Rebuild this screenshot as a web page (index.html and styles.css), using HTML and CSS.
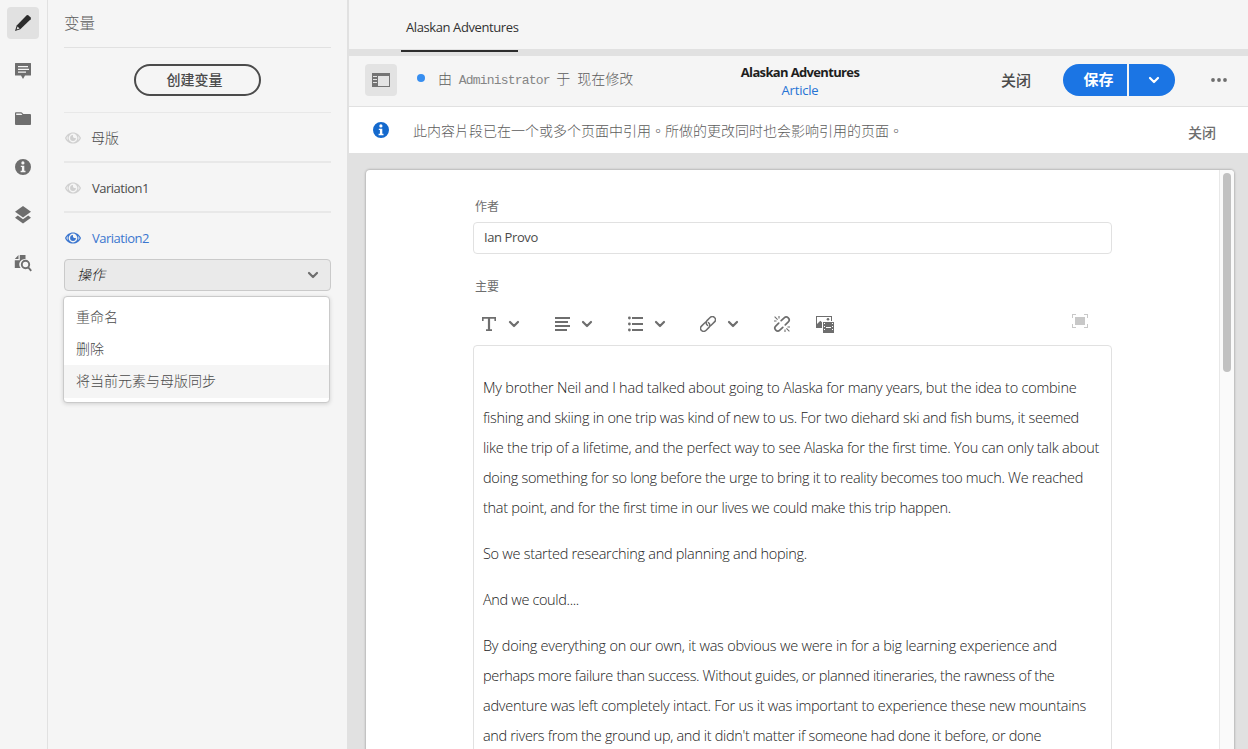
FILE: index.html
```html
<!DOCTYPE html>
<html lang="zh-CN">
<head>
<meta charset="utf-8">
<title>Alaskan Adventures</title>
<link rel="stylesheet" href="styles.css">
</head>
<body>
<svg class="defs" aria-hidden="true">
  <symbol id="chev" viewBox="0 0 12 8"><path d="M2 2 6 6l4-4" fill="none" stroke="currentColor" stroke-width="2.200" stroke-linecap="round" stroke-linejoin="round"/></symbol>
  <symbol id="eye" viewBox="0 0 16 12"><path fill-rule="evenodd" d="M0 6C1.200 2.800 4.300.400 8 .400S14.800 2.800 16 6C14.800 9.200 11.700 11.600 8 11.600S1.200 9.200 0 6ZM8 1.600A4.400 4.400 0 1 0 8 10.400 4.400 4.400 0 0 0 8 1.600ZM2.900 3.900Q1.600 5 1.500 6T2.900 8.100Q2.100 6 2.900 3.900ZM13.100 3.900Q14.400 5 14.500 6T13.100 8.100Q13.900 6 13.100 3.900Z"/><path d="M8 3.100A2.900 2.900 0 1 0 10.900 6H9L8 5Z"/></symbol>
  <symbol id="info" viewBox="0 0 16 16"><path fill-rule="evenodd" d="M8 0a8 8 0 1 0 0 16A8 8 0 0 0 8 0ZM7.900 2.300a1.600 1.600 0 1 1 0 3.200 1.600 1.600 0 0 1 0-3.200ZM5.800 6.700H9.300V11.700H10.500V13.200H5.600V11.700H6.900V8.100H5.800Z"/></symbol>
</svg>
<div class="app">
  <nav class="rail">
    <a class="rail-item selected"><svg width="18" height="18" viewBox="0 0 18 18"><path d="M12.700 1.300 14 .900 17 3.700 16.700 5.200 6.300 15.200 1 17 2.700 11.600Z"/><path d="M3.500 12.400 5.600 14.500 2.600 15.500Z" fill="#e1e1e1"/></svg></a>
    <a class="rail-item"><svg width="16" height="16" viewBox="0 0 16 16"><path fill-rule="evenodd" d="M.5 0H15.500a.5.500 0 0 1 .5.500V12a.5.500 0 0 1-.5.500H10L8 16 6 12.500H.500A.5.500 0 0 1 0 12V.500A.5.500 0 0 1 .500 0ZM3 3V4.200H13V3ZM3 5.700V6.900H14V5.700ZM3 8.500V9.700H11V8.500Z"/></svg></a>
    <a class="rail-item"><svg width="16" height="14" viewBox="0 0 16 14"><path fill-rule="evenodd" d="M0 1Q0 .300 1 .300H6Q7 .300 7.600 1.200L8.300 2H15Q16 2 16 3V12.300Q16 13 15 13H1Q0 13 0 12ZM1.200 1.500V3H7.400L6.200 1.500Z"/></svg></a>
    <a class="rail-item"><svg width="16" height="16"><use href="#info"/></svg></a>
    <a class="rail-item"><svg width="16" height="18" viewBox="0 0 16 18"><path d="M8 0 16 5.800 8 11.400 0 5.800Z"/><path d="M2.800 9.600 8 13.200 13.200 9.600 16 11.700 8 17.400 0 11.700Z"/></svg></a>
    <a class="rail-item"><svg width="18" height="18" viewBox="0 0 18 18"><path d="M4.500 1V5H.800ZM5.800 1H11.500V5A5.500 5.500 0 0 0 6.600 14H.800V6.200H5.800Z"/><path fill="none" stroke="currentColor" stroke-width="1.900" d="M15.200 10.500a3.700 3.700 0 1 1-7.400 0 3.700 3.700 0 0 1 7.400 0ZM14.100 13.200 17.200 16.800"/></svg></a>
  </nav>
  <aside class="side">
    <h1 class="side-title">变量</h1>
    <div class="create"><button class="pill">创建变量</button></div>
    <div class="row"><svg width="16" height="12"><use href="#eye"/></svg><span class="zh">母版</span></div>
    <div class="row"><svg width="16" height="12"><use href="#eye"/></svg><span>Variation1</span></div>
    <div class="row active"><svg width="16" height="12"><use href="#eye"/></svg><span>Variation2</span></div>
    <div class="select"><em>操作</em><svg width="12" height="8"><use href="#chev"/></svg>
      <ul class="menu"><li>重命名</li><li>删除</li><li class="hover">将当前元素与母版同步</li></ul>
    </div>
  </aside>
  <main class="main">
    <div class="tabs"><span class="tab">Alaskan Adventures</span></div>
    <header class="bar">
      <div class="bar-left">
        <button class="toggle"><svg width="18" height="14" viewBox="0 0 18 14"><path fill-rule="evenodd" d="M0 0H18V14H0ZM6 3V13H17V3ZM1 3V4H5V3ZM1 6V7H5V6ZM1 9V10H5V9Z"/></svg></button>
        <i class="dot"></i>
        <span class="status">由 <span class="mono">Administrator</span> 于<span class="now">现在修改</span></span>
      </div>
      <div class="bar-title"><b>Alaskan Adventures</b><a>Article</a></div>
      <div class="bar-right">
        <button class="close">关闭</button>
        <div class="save"><button class="save-main">保存</button><button class="save-more"><svg width="12" height="8"><use href="#chev"/></svg></button></div>
        <svg class="more" width="16" height="4" viewBox="0 0 16 4"><circle cx="2" cy="2" r="1.900"/><circle cx="8" cy="2" r="1.900"/><circle cx="14" cy="2" r="1.900"/></svg>
      </div>
    </header>
    <div class="notice"><svg width="16" height="16"><use href="#info"/></svg><p lang="zh-TW">此内容片段已在一个或多个页面中引用。所做的更改同时也会影响引用的页面。</p><button>关闭</button></div>
    <div class="stage">
      <section class="card">
        <div class="form">
          <label class="label">作者</label>
          <div class="input">Ian Provo</div>
          <label class="label second">主要</label>
          <div class="tools">
            <span class="tool"><svg width="16" height="16" viewBox="0 0 16 16"><path d="M1 1H15V5H13.400V2.700H9.100V13.300H11V15H5V13.300H6.900V2.700H2.600V5H1Z"/></svg><svg width="12" height="8"><use href="#chev"/></svg></span>
            <span class="tool"><svg width="16" height="16" viewBox="0 0 16 16"><path d="M1 1h15v2H1zM1 5h13v2H1zM1 9h15v2H1zM1 13h12v2H1z"/></svg><svg width="12" height="8"><use href="#chev"/></svg></span>
            <span class="tool"><svg width="16" height="16" viewBox="0 0 16 16"><path d="M5 1h11v2H5zM5 7h11v2H5zM5 13h11v2H5z"/><circle cx="2.400" cy="2" r="1.400"/><circle cx="2.400" cy="8" r="1.400"/><circle cx="2.400" cy="14" r="1.400"/></svg><svg width="12" height="8"><use href="#chev"/></svg></span>
            <span class="tool"><svg width="16" height="16" viewBox="1 1 16 16"><g fill="none" stroke="currentColor" stroke-width="1.500" stroke-linecap="round"><path d="M10.800 10.900A3.100 3.100 0 0 0 12.400 10L15.500 6.900A3.100 3.100 0 0 0 11.100 2.500L8 5.600A3.100 3.100 0 0 0 8.600 10.400"/><path d="M7.200 7.100A3.100 3.100 0 0 0 5.600 8L2.500 11.100A3.100 3.100 0 0 0 6.900 15.500L10 12.400A3.100 3.100 0 0 0 9.400 7.600"/></g></svg><svg width="12" height="8"><use href="#chev"/></svg></span>
            <svg class="unlink" width="18" height="18" viewBox="0 0 18 18"><g fill="none" stroke="currentColor" stroke-width="1.700" stroke-linecap="round"><path d="M8.200 5.700 11.200 2.800A2.900 2.900 0 0 1 15.300 6.900L12.300 9.900M9.800 12.300 6.800 15.200A2.900 2.900 0 0 1 2.700 11.100L5.700 8.100"/></g><path fill="none" stroke="currentColor" stroke-width="1.100" d="M1 6H3.500M1.600 1.600 4.600 4.600M6 1V3.500M14.500 12H17M13.400 13.400 16.400 16.400M12 14.500V17"/></svg>
            <svg class="media" width="19" height="18" viewBox="0 0 19 18"><path fill-rule="evenodd" d="M1 1H17V6H16V2H2V9L5.300 5.800 7 7.300V13H1Z"/><circle cx="13" cy="4.200" r="1.300"/><path fill-rule="evenodd" d="M8 7H19V18H8ZM9 8V9H10V8ZM9 11V12H10V11ZM9 14V15H10V14ZM17 8V9H18V8ZM17 11V12H18V11ZM17 14V15H18V14ZM11 12V13H16V12Z"/></svg>
            <svg class="full" width="16" height="14" viewBox="0 0 16 14"><path d="M3 3h10v8H3zM0 0h4v1H1v3H0zM12 0h4v4h-1V1h-3zM0 10h1v3h3v1H0zM15 10h1v4h-4v-1h3z"/></svg>
          </div>
          <article class="editor">
            <p><span class="l1">My brother Neil and I had talked about going to Alaska for many years, but the idea to combine</span> <span class="l2">fishing and skiing in one trip was kind of new to us. For two diehard ski and fish bums, it seemed</span> <span class="l3">like the trip of a lifetime, and the perfect way to see Alaska for the first time. You can only talk about</span> <span class="l4">doing something for so long before the urge to bring it to reality becomes too much. We reached</span> <span class="l5">that point, and for the first time in our lives we could make this trip happen.</span></p>
            <p><span class="l6">So we started researching and planning and hoping.</span></p>
            <p><span class="l7">And we could....</span></p>
            <p><span class="l8">By doing everything on our own, it was obvious we were in for a big learning experience and</span> <span class="l9">perhaps more failure than success. Without guides, or planned itineraries, the rawness of the</span> <span class="l10">adventure was left completely intact. For us it was important to experience these new mountains</span> <span class="l11">and rivers from the ground up, and it didn't matter if someone had done it before, or done</span></p>
          </article>
        </div>
        <div class="scroll"><i></i></div>
      </section>
    </div>
  </main>
</div>
</body>
</html>
```
FILE: styles.css
```css
* { box-sizing: border-box; }
body { margin: 0; font-family: "Open Sans", "Noto Sans CJK SC", sans-serif; font-size: 13px; letter-spacing: -.4px; color: #4b4b4b; }
h1, p, ul { margin: 0; padding: 0; list-style: none; }
button { font: inherit; color: inherit; border: 0; background: none; padding: 0; }
svg { display: block; fill: currentColor; flex: none; }
.defs { position: absolute; width: 0; height: 0; }
.app { display: flex; width: 1248px; height: 749px; overflow: hidden; background: #f5f5f5; }

.rail { width: 48px; border-right: 1px solid #e1e1e1; padding: 7px 0 0 7px; display: flex; flex-direction: column; gap: 16px; color: #6e6e6e; flex: none; }
.rail-item { width: 32px; height: 32px; display: grid; place-items: center; border-radius: 4px; }
.rail-item.selected { background: #e1e1e1; color: #2c2c2c; }

.side { width: 301px; flex: none; padding: 0 16px; border-right: 2px solid #e1e1e1; }
.side-title { height: 48px; line-height: 46px; font-size: 15.5px; letter-spacing: 0; font-weight: 300; color: #5c5c5c; border-bottom: 1px solid #e1e1e1; }
.create { height: 65px; padding-top: 16px; border-bottom: 1px solid #e8e8e8; text-align: center; }
.pill { width: 127px; height: 32px; border: 2px solid #4b4b4b; border-radius: 16px; font-size: 14px; letter-spacing: 0; font-weight: 500; line-height: 26px; padding-right: 6px; }
.row { height: 50px; display: flex; align-items: center; gap: 11px; padding: 2px 0 0 1px; border-bottom: 2px solid #e8e8e8; }
.row svg { color: #d0d0d0; }
.row span { letter-spacing: -.5px; }
.row .zh { font-size: 14px; letter-spacing: 0; font-weight: 300; margin: -2px 0 0 -1px; }
.row.active { color: #3b76cf; border: 0; height: 46px; padding-top: 4px; }
.row.active svg { color: #3b76cf; }
.select { position: relative; height: 32px; border: 1px solid #cacaca; border-radius: 4px; background: #eaeaea; display: flex; justify-content: space-between; align-items: center; padding: 0 11px 0 12px; font-size: 14px; letter-spacing: 0; font-weight: 300; color: #222; }
.select svg { color: #6e6e6e; }
.select em { padding-bottom: 2px; }
.menu { position: absolute; left: -2px; top: 36px; width: 267px; height: 107px; padding: 4px 0; background: #fff; border: 1px solid #cacaca; border-radius: 4px; box-shadow: 0 1px 4px rgba(0,0,0,.15); color: #4b4b4b; }
.menu li { height: 32px; line-height: 31px; padding-left: 12px; }
.menu .hover { background: #f5f5f5; height: 33px; line-height: 32px; }

.main { flex: 1; min-width: 0; display: flex; flex-direction: column; background: #e1e1e1; }
.tabs { height: 56px; border-bottom: 7px solid #e1e1e1; background: #f5f5f5; padding-left: 52px; display: flex; }
.tab { height: 52px; width: 117px; padding-left: 5px; line-height: 54px; white-space: nowrap; color: #323232; border-bottom: 2px solid #2c2c2c; }
.bar { height: 51px; background: #f5f5f5; border-bottom: 1px solid #e1e1e1; display: grid; grid-template-columns: 380px 142px 1fr; }
.bar-left { display: flex; align-items: center; padding-left: 16px; padding-bottom: 3px; }
.toggle { width: 32px; height: 32px; background: #e3e3e3; border-radius: 4px; display: grid; place-items: center; color: #747474; }
.dot { width: 8px; height: 8px; border-radius: 50%; background: #378ef0; margin: 0 13px 3px 20px; }
.status { font-size: 14px; letter-spacing: 0; font-weight: 300; color: #5c5c5c; white-space: pre; margin-top: -3px; }
.mono { font-family: "Liberation Mono", monospace; font-size: 13px; letter-spacing: -.8px; color: #858585; margin: 0 3px; }
.now { margin-left: 7px; }
.bar-title { text-align: center; line-height: 18px; padding-top: 7px; display: flex; flex-direction: column; color: #1e1e1e; white-space: nowrap; }
.bar-title b { letter-spacing: -.65px; }
.bar-title a { color: #2673d4; letter-spacing: -.2px; }
.bar-right { display: flex; align-items: center; justify-content: flex-end; padding: 0 21px 3px 0; color: #4b4b4b; font-size: 15px; letter-spacing: 0; font-weight: 500; }
.close { margin-right: 32px; padding-bottom: 1px; }
.save { display: flex; gap: 2px; color: #fff; height: 32px; margin-right: 36px; }
.save button { background: #1b75e4; }
.save .save-main { width: 64px; border-radius: 16px 0 0 16px; font-weight: 700; padding: 0 0 3px 7px; }
.save .save-more { width: 46px; border-radius: 0 16px 16px 0; display: grid; place-items: center; padding-left: 4px; }
.more { color: #6e6e6e; }
.notice { height: 46px; background: #fff; display: flex; align-items: center; padding: 0 32px 0 24px; color: #1469cd; letter-spacing: 0; }
.notice p { margin-left: 24px; flex: 1; font-family: "Noto Sans CJK TC", "Noto Sans CJK SC", sans-serif; font-size: 14px; font-weight: 300; color: #5c5c5c; }
.notice button { color: #6e6e6e; font-size: 14px; font-weight: 500; padding-top: 4px; }

.stage { flex: 1; padding: 17px 14px 0 17px; min-height: 0; }
.card { height: 600px; background: #fff; border-radius: 4px; box-shadow: 0 0 2px 1px rgba(0,0,0,.18); display: flex; justify-content: space-between; overflow: hidden; }
.form { padding: 25px 0 0 107px; }
.label { display: block; height: 27px; padding: 2px 0 0 2px; font-size: 12px; letter-spacing: 0; line-height: 20px; font-weight: 400; color: #6e6e6e; }
.input { width: 639px; height: 32px; border: 1px solid #e1e1e1; border-radius: 4px; padding-left: 10px; line-height: 29px; }
.label.second { margin-top: 21px; height: 22px; }
.tools { height: 48px; display: flex; align-items: center; padding-left: 8px; color: #6e6e6e; padding-top: 5px; }
.tool { width: 73px; display: flex; align-items: center; gap: 11px; }
.media { margin-left: 24px; }
.full { margin: -5px 0 0 238px; color: #c8c8c8; }
.editor { width: 639px; height: 500px; border: 1px solid #e1e1e1; border-radius: 4px; padding: 27px 9px; font-size: 14.5px; font-weight: 300; line-height: 30px; color: #222; }
.editor p { margin-bottom: 16px; }
.editor span { display: block; white-space: nowrap; }
.l1 { letter-spacing: -.236px; }
.l2 { letter-spacing: -.278px; }
.l3 { letter-spacing: -.258px; }
.l4 { letter-spacing: -.303px; }
.l5 { letter-spacing: -.272px; }
.l6 { letter-spacing: -.288px; }
.l7 { letter-spacing: -.35px; }
.l8 { letter-spacing: -.24px; }
.l9 { letter-spacing: -.355px; }
.l10 { letter-spacing: -.26px; }
.l11 { letter-spacing: -.334px; }
.scroll { width: 15px; border-left: 1px solid #e8e8e8; background: #fafafa; padding: 3px 0 0 3px; }
.scroll i { display: block; width: 8px; height: 199px; border-radius: 4px; background: #c1c1c1; }
```
